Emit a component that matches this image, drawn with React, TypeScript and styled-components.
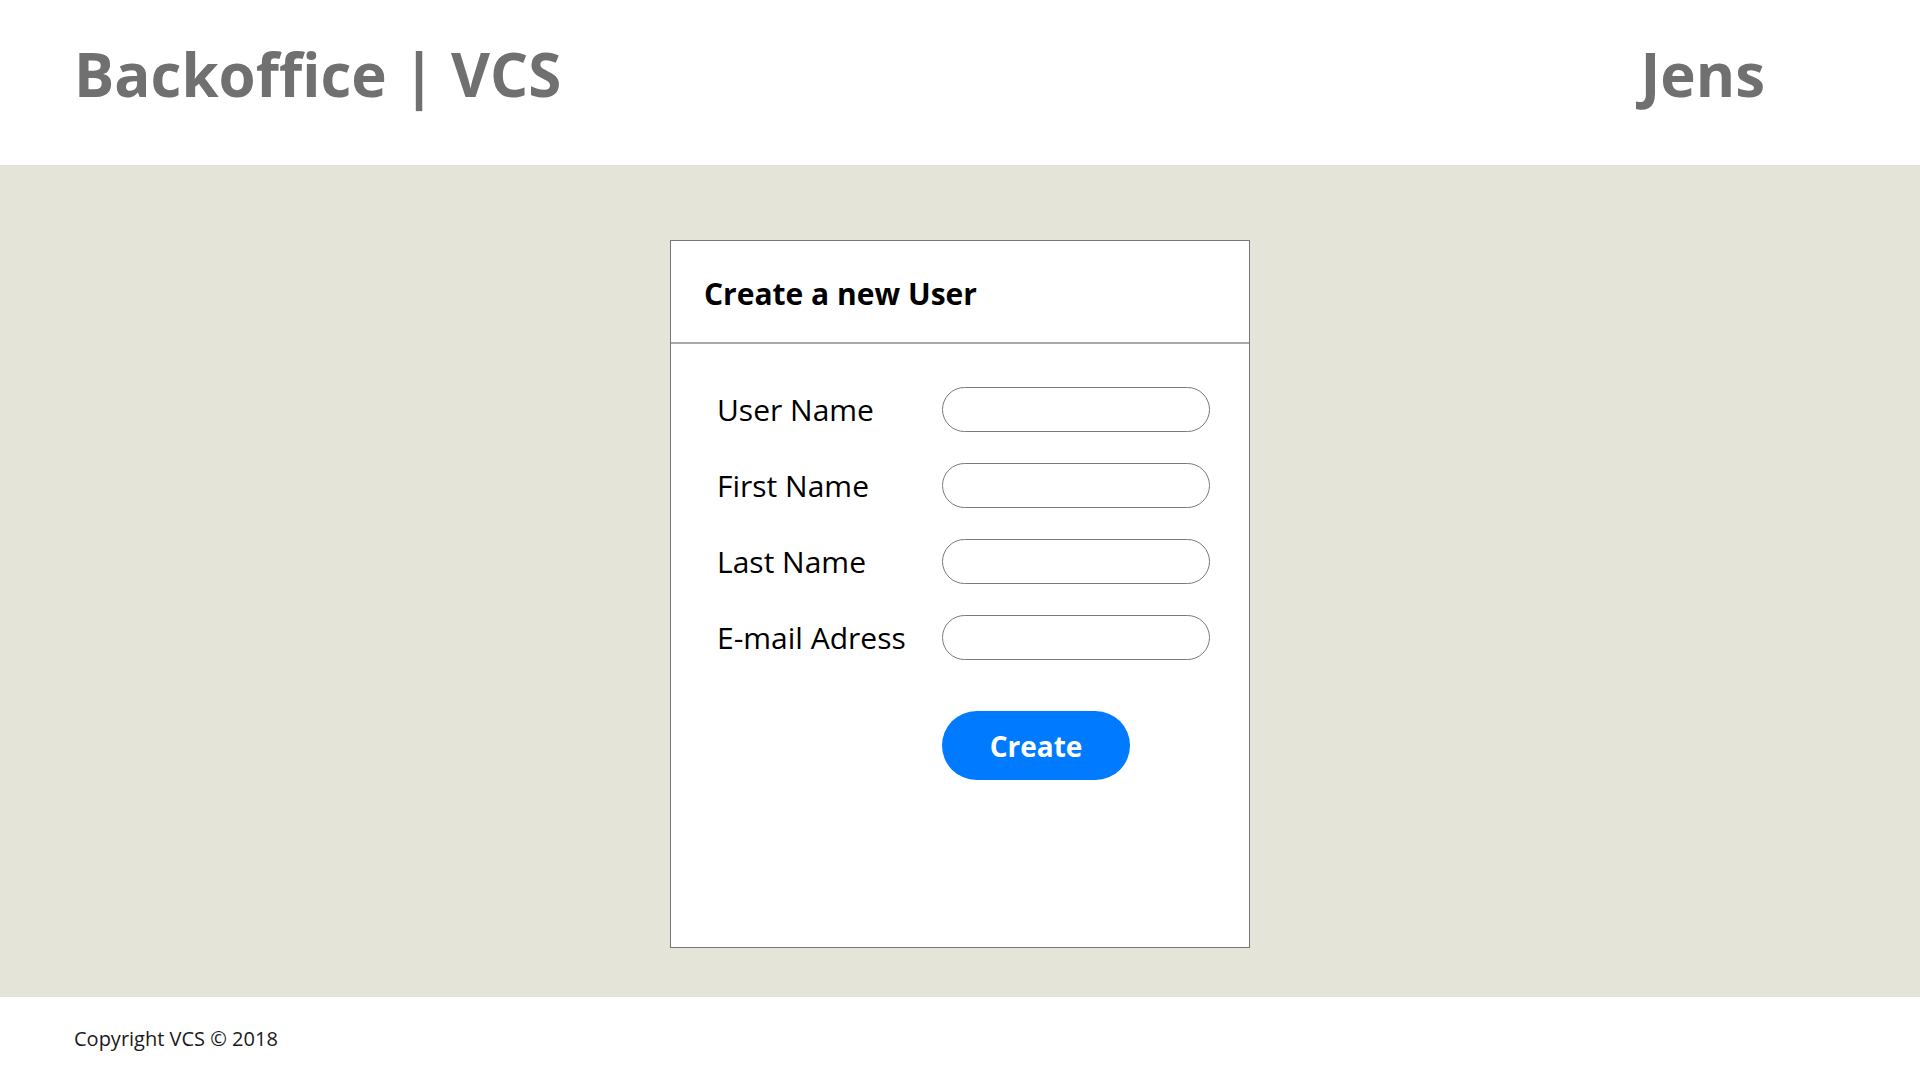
import React from "react";
import styled, { createGlobalStyle } from "styled-components";

const GlobalStyle = createGlobalStyle`
  html, body, #root {
    margin: 0;
    padding: 0;
    height: 100%;
  }
  body {
    font-family: "Open Sans", "Liberation Sans", sans-serif;
  }
`;

const Page = styled.div`
  display: flex;
  flex-direction: column;
  height: 100vh;
  background: #ffffff;
`;

const Header = styled.header`
  height: 165px;
  flex-shrink: 0;
  display: flex;
  align-items: center;
  justify-content: space-between;
  padding: 0 155px 18px 74px;
  box-sizing: border-box;
`;

const Brand = styled.h1`
  margin: 0;
  font-size: 60px;
  font-weight: 700;
  color: #707070;
`;

const UserName = styled.div`
  font-size: 60px;
  font-weight: 700;
  color: #707070;
`;

const Main = styled.main`
  flex: 1;
  background: #e4e4d8;
  display: flex;
  justify-content: center;
  align-items: flex-start;
  padding-top: 75px;
`;

const Card = styled.section`
  width: 580px;
  height: 708px;
  box-sizing: border-box;
  background: #ffffff;
  border: 1px solid #777777;
`;

const CardHeader = styled.div`
  height: 103px;
  box-sizing: border-box;
  display: flex;
  align-items: center;
  padding: 3px 32px 0 33px;
  border-bottom: 2px solid #a8a8a8;
`;

const CardTitle = styled.h2`
  margin: 0;
  font-size: 30px;
  font-weight: 700;
  color: #000000;
`;

const Form = styled.form`
  display: flex;
  flex-direction: column;
  gap: 31px;
  padding: 43px 0 0 46px;
`;

const Row = styled.label`
  display: flex;
  align-items: center;
`;

const Label = styled.span`
  width: 225px;
  font-size: 30px;
  color: #000000;
`;

const Input = styled.input`
  width: 268px;
  height: 45px;
  box-sizing: border-box;
  border: 1px solid #7a7a7a;
  border-radius: 23px;
  background: #ffffff;
  padding: 0 16px;
  font-family: inherit;
  font-size: 18px;
  outline: none;
`;

const Actions = styled.div`
  padding-left: 225px;
  margin-top: 20px;
`;

const Button = styled.button`
  width: 188px;
  height: 69px;
  border: none;
  border-radius: 35px;
  background: #007bff;
  color: #ffffff;
  font-family: inherit;
  font-size: 28px;
  font-weight: 700;
  cursor: pointer;
`;

const Footer = styled.footer`
  height: 83px;
  flex-shrink: 0;
  display: flex;
  align-items: center;
  padding-left: 74px;
  font-size: 20px;
  color: #1a1a1a;
`;

const fields = ["User Name", "First Name", "Last Name", "E-mail Adress"];

const App: React.FC = () => {
  return (
    <>
      <GlobalStyle />
      <Page>
        <Header>
          <Brand>Backoffice | VCS</Brand>
          <UserName>Jens</UserName>
        </Header>
        <Main>
          <Card>
            <CardHeader>
              <CardTitle>Create a new User</CardTitle>
            </CardHeader>
            <Form onSubmit={(e) => e.preventDefault()}>
              {fields.map((f) => (
                <Row key={f}>
                  <Label>{f}</Label>
                  <Input type="text" />
                </Row>
              ))}
              <Actions>
                <Button type="submit">Create</Button>
              </Actions>
            </Form>
          </Card>
        </Main>
        <Footer>Copyright VCS © 2018</Footer>
      </Page>
    </>
  );
};

export default App;
